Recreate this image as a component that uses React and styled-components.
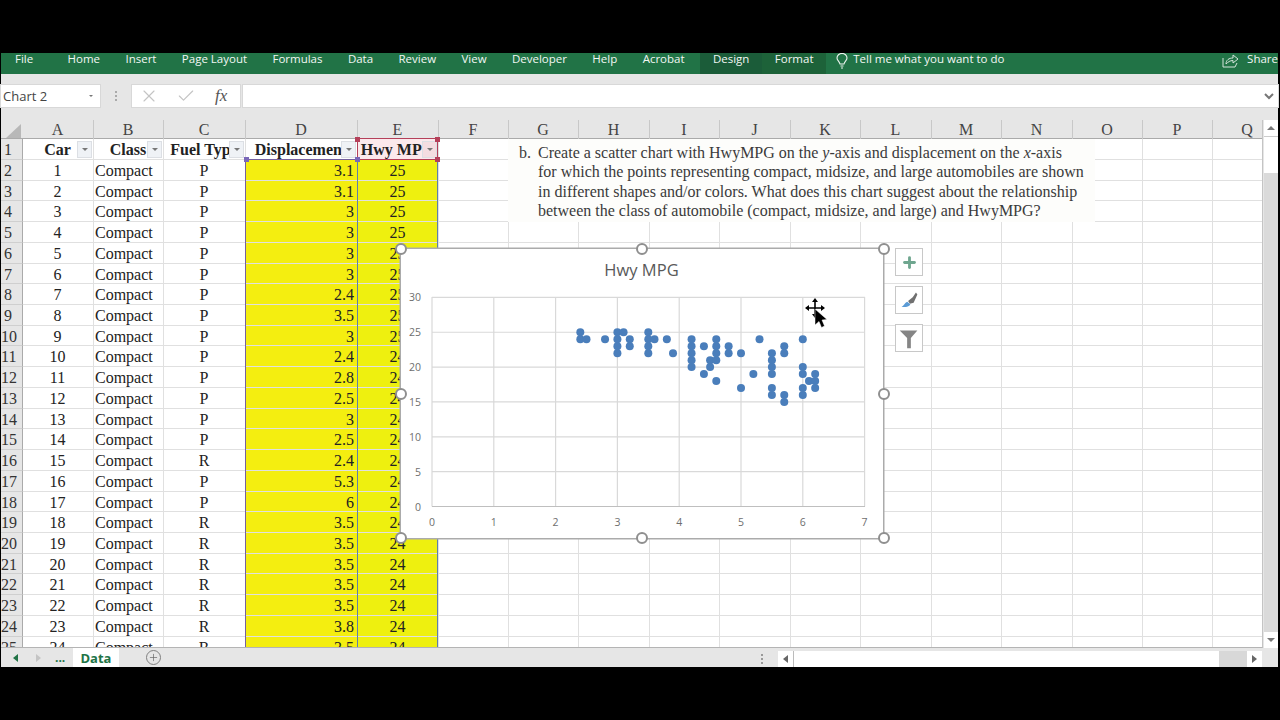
import React from "react";
import styled, { createGlobalStyle } from "styled-components";
import { X, Check, Plus } from "lucide-react";

const GlobalStyle = createGlobalStyle`
  html, body {
    margin: 0;
    padding: 0;
    background: #000;
  }
`;

const UI_FONT = `"Open Sans", "Liberation Sans", sans-serif`;
const SHEET_FONT = `"Liberation Serif", "Times New Roman", serif`;

const COLUMNS = "22px 71px 70px 82px 112px 81px 70px 70px 71px 70px 71px 70px 71px 70px 71px 70px 70px 70px";
const LETTERS = "ABCDEFGHIJKLMNOPQ".split("");

const Page = styled.div`
  width: 1280px;
  height: 720px;
  box-sizing: border-box;
  padding: 53px 2px 53px 1px;
  background: #000;
  overflow: hidden;
  display: flex;
  flex-direction: column;
`;

const Ribbon = styled.div`
  height: 21px;
  flex: none;
  display: flex;
  align-items: stretch;
  padding-left: 14px;
  background: #217346;
  color: #f2f7f4;
  font: 11.5px/12px ${UI_FONT};
`;

const Tab = styled.div`
  padding: 0 12.7px;
  margin-left: ${(p) => p.$first ? "-12.7px" : p.$gap || "0"};
  margin-right: ${(p) => p.$first ? "9px" : "0"};
  background: ${(p) => p.$bg || "transparent"};
  white-space: nowrap;
`;

const TellMe = styled.div`
  display: flex;
  align-items: flex-start;
  gap: 5px;
  margin-left: 10px;
  white-space: nowrap;
`;

const Share = styled.div`
  margin-left: auto;
  display: flex;
  align-items: flex-start;
  gap: 8px;
  white-space: nowrap;
`;

const FormulaBar = styled.div`
  flex: none;
  height: 46px;
  box-sizing: border-box;
  padding: 11px 0 13px;
  background: #e6e6e6;
  display: flex;
  align-items: stretch;
`;

const NameBox = styled.div`
  width: 99px;
  box-sizing: border-box;
  background: #fff;
  box-shadow: 0 0 0 1px #d8d8d8;
  display: flex;
  align-items: center;
  justify-content: space-between;
  padding: 0 7px 0 2px;
  color: #444;
  font: 13px ${UI_FONT};
`;

const SmallArrow = styled.span`
  width: 0;
  height: 0;
  border-left: ${(p) => p.$size || 3}px solid transparent;
  border-right: ${(p) => p.$size || 3}px solid transparent;
  border-top: ${(p) => p.$size || 3}px solid #777;
`;

const Grip = styled.div`
  width: 32px;
  display: flex;
  flex-direction: column;
  align-items: center;
  justify-content: center;
  gap: 2px;
  span {
    width: 2px;
    height: 2px;
    background: #aaa;
  }
`;

const FormulaButtons = styled.div`
  width: 108px;
  margin-right: 3px;
  box-sizing: border-box;
  background: #fff;
  box-shadow: 0 0 0 1px #d8d8d8;
  display: flex;
  align-items: center;
  color: #c4c4c4;
  padding-left: 7px;
  gap: 17px;
`;

const Fx = styled.span`
  margin-left: 2px;
  font: italic 17px ${SHEET_FONT};
  color: #555;
`;

const FormulaInput = styled.div`
  flex: 1;
  background: #fff;
  box-shadow: 0 0 0 1px #d8d8d8;
  display: flex;
  align-items: center;
  justify-content: flex-end;
  padding-right: 4px;
  color: #777;
`;

const Workspace = styled.div`
  flex: none;
  height: 528px;
  display: flex;
  background: #e6e6e6;
`;

const SheetArea = styled.div`
  width: 1262px;
  position: relative;
  overflow: hidden;
  background: #fff;
  border-bottom: 1px solid #b4b4b4;
  border-right: 1px solid #c4c4c4;
  box-sizing: border-box;
`;

const HeaderRow = styled.div`
  display: grid;
  grid-template-columns: ${COLUMNS};
  height: 18px;
  background: #e6e6e6;
  border-bottom: 1px solid #aaa;
  box-sizing: content-box;
`;

const Corner = styled.div`
  position: relative;
  &::after {
    content: "";
    position: absolute;
    right: 2px;
    bottom: 1px;
    width: 15px;
    height: 14px;
    background: #b8b8b8;
    clip-path: polygon(100% 0, 100% 100%, 0 100%);
  }
`;

const ColumnHead = styled.div`
  border-right: 1px solid #c8c8c8;
  padding-right: 1px;
  text-align: center;
  color: #444;
  font: 16px/19px ${SHEET_FONT};
`;

const Row = styled.div`
  display: grid;
  grid-template-columns: ${COLUMNS};
  height: ${(p) => p.$height}px;
`;

const RowHead = styled.div`
  background: #e6e6e6;
  border-right: 1px solid #aaa;
  border-bottom: 1px solid #cfcfcf;
  padding-right: 7px;
  overflow: hidden;
  text-align: center;
  color: #333;
  white-space: nowrap;
  font: 16px/22px ${SHEET_FONT};
`;

const cellPadding = {
  left: "0 2px 0 1px",
  center: "0 2px 0 1px",
  right: "0 3px 0 2px",
};

const Cell = styled.div`
  position: relative;
  box-sizing: border-box;
  overflow: hidden;
  white-space: nowrap;
  padding: ${(p) => cellPadding[p.$align || "left"]};
  background: ${(p) => p.$fill || "#fff"};
  border-right: 1px solid #e0e0e0;
  border-bottom: 1px solid #e0e0e0;
  text-align: ${(p) => p.$align || "left"};
  font: ${(p) => p.$bold ? "bold" : "normal"} 16px/22px ${SHEET_FONT};
  color: #222;
`;

const FilterButton = styled.span`
  position: absolute;
  right: 1px;
  top: 2px;
  width: 15px;
  height: 17px;
  box-sizing: border-box;
  display: flex;
  align-items: center;
  justify-content: center;
  background: ${(p) => p.$bg || "#eff2f6"};
  border: 1px solid #dcdfe4;
`;

const TextBox = styled.div`
  position: absolute;
  left: 507px;
  top: 19px;
  width: 587px;
  height: 83px;
  box-sizing: border-box;
  padding: 4px 0 0 11px;
  background: #fdfdfb;
  display: flex;
  gap: 7px;
  color: #3a3a3a;
  font: 16px/19.3px ${SHEET_FONT};
  white-space: nowrap;
`;

const RangeBox = styled.div`
  position: absolute;
  box-sizing: border-box;
  left: ${(p) => p.$left}px;
  top: ${(p) => p.$top}px;
  width: ${(p) => p.$width}px;
  height: ${(p) => p.$height}px;
  border: 1.5px solid ${(p) => p.$color};
`;

const RangeHandle = styled.span`
  position: absolute;
  width: 5px;
  height: 5px;
  left: ${(p) => p.$left}px;
  top: ${(p) => p.$top}px;
  background: ${(p) => p.$color};
`;

const Chart = styled.div`
  position: absolute;
  left: 400px;
  top: 129px;
  width: 482px;
  height: 289px;
  background: #fff;
  box-shadow: 0 0 0 1.5px #ababab;
`;

const PlotSvg = styled.svg`
  display: block;
  margin-left: -1px;
`;

const Handle = styled.span`
  position: absolute;
  left: ${(p) => p.$x - 6}px;
  top: ${(p) => p.$y - 6}px;
  width: 12px;
  height: 12px;
  box-sizing: border-box;
  border-radius: 50%;
  background: #fff;
  border: 2px solid #8f8f8f;
`;

const ChartTools = styled.div`
  position: absolute;
  left: 494px;
  top: -1px;
  display: flex;
  flex-direction: column;
  gap: 10px;
`;

const ToolButton = styled.div`
  width: 28px;
  height: 28px;
  box-sizing: border-box;
  background: #fff;
  border: 1px solid #c8c8c8;
  display: flex;
  align-items: center;
  justify-content: center;
  color: #6fa68f;
`;

const MoveCursor = styled.svg`
  position: absolute;
  left: 404px;
  top: 49px;
`;

const VScroll = styled.div`
  flex: 1;
  display: flex;
  flex-direction: column;
  padding-left: 1px;
  background: #e6e6e6;
`;

const ScrollStep = styled.div`
  flex: none;
  height: 16px;
  background: #fff;
  display: flex;
  align-items: center;
  justify-content: center;
`;

const ScrollThumb = styled.div`
  flex: none;
  height: 37px;
  background: #fff;
  border-top: 1px solid #ccc;
  box-sizing: border-box;
`;

const ScrollTrack = styled.div`
  flex: 1;
  background: #dadada;
`;

const UpArrow = styled.span`
  width: 0;
  height: 0;
  border-left: 4px solid transparent;
  border-right: 4px solid transparent;
  border-bottom: 4px solid #777;
`;

const DownArrow = styled(SmallArrow)`
  border-left-width: 4px;
  border-right-width: 4px;
  border-top-width: 4px;
`;

const TabBar = styled.div`
  flex: none;
  height: 19px;
  display: flex;
  align-items: stretch;
  background: #e6e6e6;
  color: #666;
  font: 12px ${UI_FONT};
`;

const TabNav = styled.div`
  width: 72px;
  display: flex;
  align-items: center;
  padding-left: 12px;
  box-sizing: border-box;
  gap: 18px;
`;

const Triangle = styled.span`
  width: 0;
  height: 0;
  border-top: 4px solid transparent;
  border-bottom: 4px solid transparent;
  border-${(p) => p.$dir === "left" ? "right" : "left"}: 5px solid ${(p) => p.$color};
`;

const Ellipsis = styled.span`
  color: #217346;
  font-weight: 700;
  line-height: 19px;
  margin-left: -4px;
`;

const SheetTab = styled.div`
  width: 46px;
  text-align: center;
  background: #fff;
  color: #217346;
  font: 700 13px/20px ${UI_FONT};
`;

const AddSheet = styled.div`
  width: 15px;
  height: 15px;
  margin: 2px 0 0 27px;
  box-sizing: border-box;
  border: 1px solid #808080;
  border-radius: 50%;
  display: flex;
  align-items: center;
  justify-content: center;
  color: #666;
`;

const HScroll = styled.div`
  margin-left: auto;
  width: 520px;
  padding-top: 3px;
  box-sizing: border-box;
  display: flex;
  align-items: stretch;
`;

const HGrip = styled.div`
  width: 20px;
  box-sizing: border-box;
  padding-right: 13px;
  display: flex;
  flex-direction: column;
  align-items: center;
  justify-content: center;
  gap: 2px;
  span {
    width: 2px;
    height: 2px;
    background: #999;
  }
`;

const HStep = styled.div`
  width: 15px;
  background: #fff;
  display: flex;
  align-items: center;
  justify-content: center;
`;

const HThumb = styled.div`
  flex: 1;
  background: #fff;
  border-left: 1px solid #bbb;
`;

const HTrack = styled.div`
  width: 28px;
  background: #d8d8d8;
`;

const HEnd = styled.div`
  width: 16px;
`;

const CARS = [
  ["P", "3.1", 25], ["P", "3.1", 25], ["P", "3", 25], ["P", "3", 25], ["P", "3", 25], ["P", "3", 25],
  ["P", "2.4", 25], ["P", "3.5", 25], ["P", "3", 25], ["P", "2.4", 24], ["P", "2.8", 24], ["P", "2.5", 24],
  ["P", "3", 24], ["P", "2.5", 24], ["R", "2.4", 24], ["P", "5.3", 24], ["P", "6", 24], ["R", "3.5", 24],
  ["R", "3.5", 24], ["R", "3.5", 24], ["R", "3.5", 24], ["R", "3.5", 24], ["R", "3.8", 24], ["R", "3.5", 24],
];

const POINTS = [
  [2.4, 25], [2.4, 24], [2.5, 24], [2.8, 24], [3, 25], [3.1, 25], [3, 24], [3, 23], [3, 22], [3.2, 24], [3.2, 23],
  [3.5, 25], [3.5, 24], [3.6, 24], [3.5, 23], [3.5, 22], [3.8, 24], [3.9, 22], [4.2, 24], [4.2, 23], [4.2, 22],
  [4.2, 21], [4.2, 20], [4.4, 23], [4.4, 19], [4.5, 21], [4.5, 20], [4.6, 24], [4.6, 23], [4.6, 22], [4.6, 21],
  [4.6, 18], [4.8, 23], [4.8, 22], [5, 22], [5, 17], [5.2, 19], [5.3, 24], [5.5, 22], [5.5, 21], [5.5, 20],
  [5.5, 19], [5.5, 17], [5.5, 16], [5.7, 23], [5.7, 22], [5.7, 16], [5.7, 15], [6, 24], [6, 20], [6, 19], [6, 17],
  [6, 16], [6.1, 18], [6.2, 19], [6.2, 18], [6.2, 17],
];

const HANDLES = [
  [0, 0], [241, 0], [483, 0], [0, 145], [483, 145], [0, 289], [241, 289], [483, 289],
];

const plotX = (v) => 32 + v * 61.8;
const plotY = (v) => 257.5 - v * 6.97;

const ScatterPlot = () => (
  <PlotSvg width="484" height="289">
    <text x="241.5" y="27" textAnchor="middle" fontFamily="Open Sans" fontSize="16.5" fill="#595959">Hwy MPG</text>
    {[0, 5, 10, 15, 20, 25, 30].map((v) => (
      <g key={v}>
        <line x1="32" x2="465" y1={plotY(v)} y2={plotY(v)} stroke="#d9d9d9" strokeWidth="1.2" />
        <text x="21" y={plotY(v) + 4} textAnchor="end" fontFamily="Open Sans" fontSize="10.5" fill="#6e6e6e">{v}</text>
      </g>
    ))}
    {[0, 1, 2, 3, 4, 5, 6, 7].map((v) => (
      <g key={v}>
        <line x1={plotX(v)} x2={plotX(v)} y1="48" y2="257.5" stroke="#d9d9d9" strokeWidth="1.2" />
        <text x={plotX(v)} y="277" textAnchor="middle" fontFamily="Open Sans" fontSize="10.5" fill="#6e6e6e">{v}</text>
      </g>
    ))}
    <line x1="32" x2="465" y1="257.5" y2="257.5" stroke="#bfbfbf" strokeWidth="1.2" />
    {POINTS.map(([x, y], i) => (
      <circle key={i} cx={plotX(x)} cy={plotY(y)} r="4" fill="#4a7ebb" />
    ))}
  </PlotSvg>
);

const HeaderCell = ({ label, selected }) => (
  <Cell $align="center" $bold $fill={selected ? "#fbe9ec" : "#fff"}>
    {label}
    <FilterButton $bg={selected ? "#f4dde1" : undefined}>
      <SmallArrow />
    </FilterButton>
  </Cell>
);

export default function App() {
  return (
    <Page>
      <GlobalStyle />
      <Ribbon>
        <Tab $first>File</Tab>
        <Tab>Home</Tab>
        <Tab>Insert</Tab>
        <Tab>Page Layout</Tab>
        <Tab>Formulas</Tab>
        <Tab>Data</Tab>
        <Tab>Review</Tab>
        <Tab>View</Tab>
        <Tab>Developer</Tab>
        <Tab>Help</Tab>
        <Tab>Acrobat</Tab>
        <Tab $bg="#1b5c39" $gap="3px">Design</Tab>
        <Tab $bg="#1d6239">Format</Tab>
        <TellMe>
          <svg width="12" height="16" viewBox="0 0 12 16" fill="none" stroke="#eef5f0" strokeWidth="1.1">
            <path d="M4 11 C3.5 8.5 1 7.5 1 5 a5 4.6 0 0 1 10 0 C11 7.5 8.5 8.5 8 11 Z" />
            <path d="M4.5 13 h3 M5 15 h2" />
          </svg>
          Tell me what you want to do
        </TellMe>
        <Share>
          <svg width="17" height="15" viewBox="0 0 17 15" fill="none" stroke="#d5e5db" strokeWidth="1">
            <path d="M1 5 V14 H13 L15 10" />
            <path d="M4 11 C4 7 7 5 11 5 V2 L16 6 L11 10 V7.5 C8 7.5 6 9 4 11 Z" />
          </svg>
          Share
        </Share>
      </Ribbon>
      <FormulaBar>
        <NameBox>
          Chart 2
          <SmallArrow $size={2.5} />
        </NameBox>
        <Grip>
          <span /><span /><span />
        </Grip>
        <FormulaButtons>
          <X size={20} strokeWidth={1.4} />
          <Check size={20} strokeWidth={1.4} />
          <Fx>fx</Fx>
        </FormulaButtons>
        <FormulaInput>
          <svg width="10" height="7" viewBox="0 0 10 7" fill="none" stroke="#777" strokeWidth="2">
            <path d="M1 1 L5 5 L9 1" />
          </svg>
        </FormulaInput>
      </FormulaBar>
      <Workspace>
        <SheetArea>
          <HeaderRow>
            <Corner />
            {LETTERS.map((letter) => (
              <ColumnHead key={letter}>{letter}</ColumnHead>
            ))}
          </HeaderRow>
          <Row $height={21}>
            <RowHead>1</RowHead>
            <HeaderCell label="Car" />
            <HeaderCell label="Class" />
            <HeaderCell label="Fuel Type" />
            <HeaderCell label="Displacement" />
            <HeaderCell label="Hwy MPG" selected />
            {LETTERS.slice(5).map((letter) => (
              <Cell key={letter} />
            ))}
          </Row>
          {CARS.map(([fuel, displacement, mpg], i) => (
            <Row key={i} $height={20.73}>
              <RowHead>{i + 2}</RowHead>
              <Cell $align="center">{i + 1}</Cell>
              <Cell>Compact</Cell>
              <Cell $align="center">{fuel}</Cell>
              <Cell $align="right" $fill="#f4ee10">{displacement}</Cell>
              <Cell $align="center" $fill="#eef00f">{mpg}</Cell>
              {LETTERS.slice(5).map((letter) => (
                <Cell key={letter} />
              ))}
            </Row>
          ))}
          <RangeBox $left={244} $top={39} $width={113} $height={520} $color="#75609f" />
          <RangeBox $left={356} $top={39} $width={81} $height={520} $color="#5f7fa8" />
          <RangeBox $left={356} $top={18} $width={81} $height={22} $color="#b5405a" />
          <RangeHandle $left={243} $top={37} $color="#7a68b8" />
          <RangeHandle $left={354} $top={37} $color="#7a68b8" />
          <RangeHandle $left={354} $top={17} $color="#b5405a" />
          <RangeHandle $left={434} $top={17} $color="#b5405a" />
          <RangeHandle $left={434} $top={37} $color="#b5405a" />
          <TextBox>
            <span>b.</span>
            <div>
              Create a scatter chart with HwyMPG on the <i>y</i>-axis and displacement on the <i>x</i>-axis<br />
              for which the points representing compact, midsize, and large automobiles are shown<br />
              in different shapes and/or colors. What does this chart suggest about the relationship<br />
              between the class of automobile (compact, midsize, and large) and HwyMPG?
            </div>
          </TextBox>
          <Chart>
            <ScatterPlot />
            {HANDLES.map(([x, y]) => (
              <Handle key={`${x}-${y}`} $x={x} $y={y} />
            ))}
            <MoveCursor width="24" height="34" viewBox="0 0 24 34">
              <path d="M10 2 V18 M2 10 H18" stroke="#000" strokeWidth="1.6" />
              <path d="M10 0 L7 4 H13 Z M10 20 L7 16 H13 Z M0 10 L4 7 V13 Z M20 10 L16 7 V13 Z" fill="#000" />
              <path d="M10 11 V27 L14 23.5 L16.5 29.5 L19.5 28 L17 22 L22 21.5 Z" fill="#000" stroke="#fff" strokeWidth="0.5" />
            </MoveCursor>
            <ChartTools>
              <ToolButton>
                <Plus size={17} strokeWidth={4} />
              </ToolButton>
              <ToolButton>
                <svg width="28" height="28" viewBox="0 0 28 28">
                  <path d="M21.5 6 L23 8 L19 17 L15 18 L13 15 L18 11 Z" fill="#707070" />
                  <path d="M12 16 L15.5 18.5 C14 21.5 10 22 6 21.5 C8.5 20.5 9.5 17 12 16 Z" fill="#5b9bd5" />
                </svg>
              </ToolButton>
              <ToolButton>
                <svg width="28" height="28" viewBox="0 0 28 28">
                  <path d="M4 6 H23 L16 14 V25 H12 V14 Z" fill="#858585" />
                </svg>
              </ToolButton>
            </ChartTools>
          </Chart>
        </SheetArea>
        <VScroll>
          <ScrollStep><UpArrow /></ScrollStep>
          <ScrollThumb />
          <ScrollTrack />
          <ScrollStep><DownArrow /></ScrollStep>
        </VScroll>
      </Workspace>
      <TabBar>
        <TabNav>
          <Triangle $dir="left" $color="#217346" />
          <Triangle $dir="right" $color="#c4c4c4" />
          <Ellipsis>...</Ellipsis>
        </TabNav>
        <SheetTab>Data</SheetTab>
        <AddSheet><Plus size={11} strokeWidth={1.5} /></AddSheet>
        <HScroll>
          <HGrip><span /><span /><span /></HGrip>
          <HStep><Triangle $dir="left" $color="#666" /></HStep>
          <HThumb />
          <HTrack />
          <HStep><Triangle $dir="right" $color="#666" /></HStep>
          <HEnd />
        </HScroll>
      </TabBar>
    </Page>
  );
}
